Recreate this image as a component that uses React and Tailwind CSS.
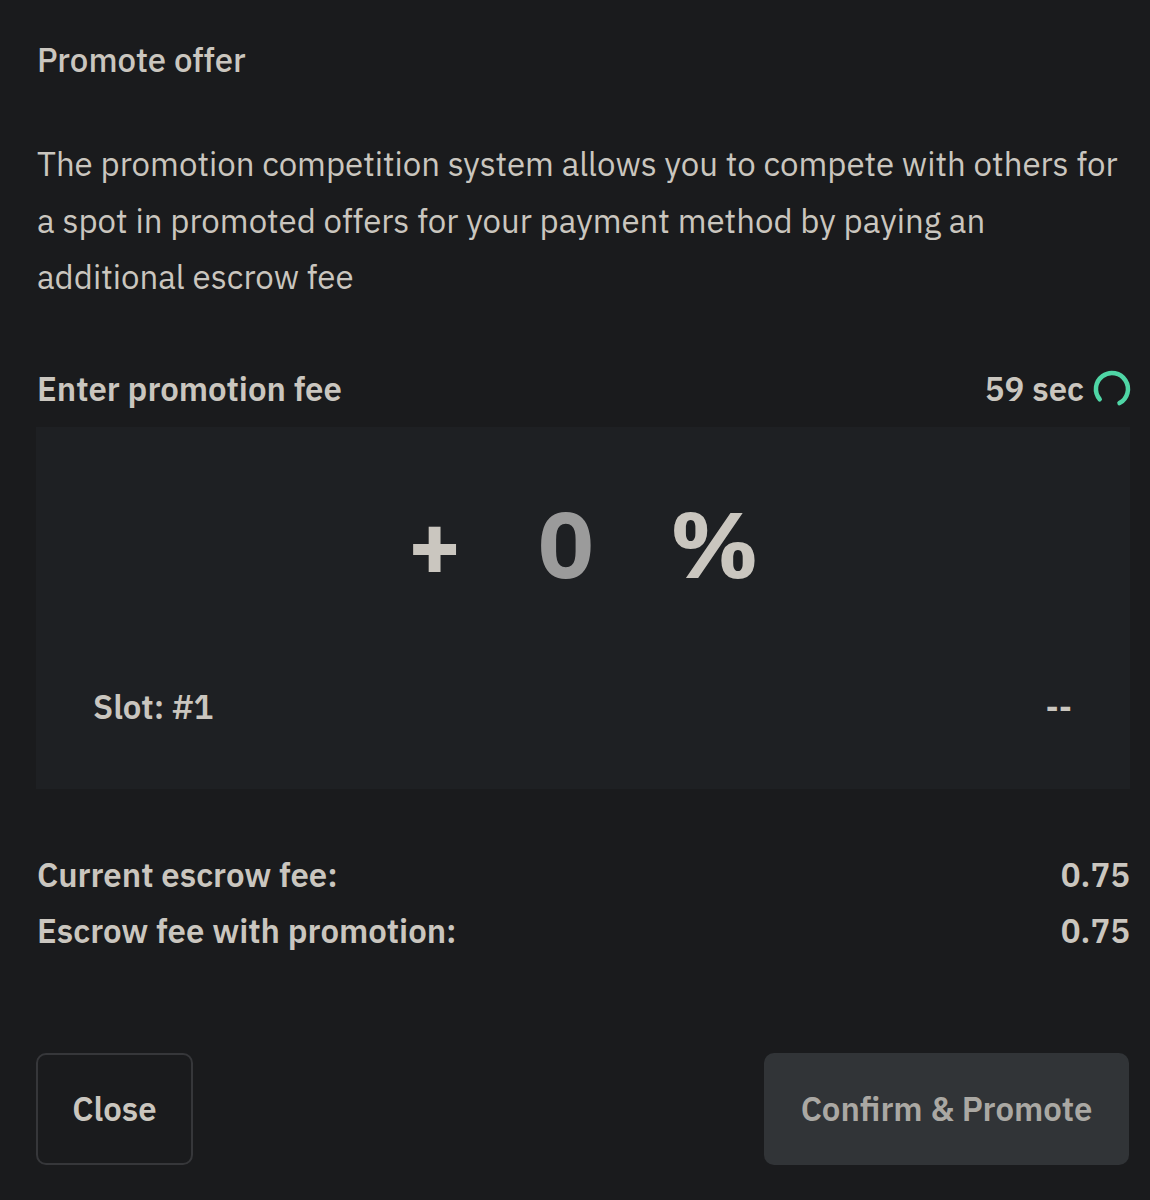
export default function App() {
  return (
    <div
      className="w-[1150px] h-[1200px] bg-[#1a1b1d] text-[#cac6bf] px-[37px] pt-[40px]"
      style={{ fontFamily: '"IBM Plex Sans", Roboto, sans-serif' }}
    >
      <div className="text-[33px] leading-[40px] font-medium">Promote offer</div>
      <p className="mt-[56px] -mr-[20px] text-[33px] leading-[56.5px] font-normal">
        The promotion competition system allows you to compete with others for a spot in promoted offers for your payment method by paying an additional escrow fee
      </p>
      <div className="mt-[63px] flex items-center justify-between">
        <div className="text-[33px] leading-[40px] font-semibold">Enter promotion fee</div>
        <div className="flex items-center gap-[8px] -mr-[19px]">
          <span className="text-[33px] leading-[40px] font-semibold">59 sec</span>
          <svg width="40" height="40" viewBox="0 0 40 40" fill="none">
            <path
              d="M7.7 30.3 A 16 16 0 1 1 27.5 34.1"
              stroke="#4fd6a6"
              strokeWidth="4.5"
              strokeLinecap="round"
            />
          </svg>
        </div>
      </div>
      <div className="mt-[18px] -ml-[1px] w-[1094px] h-[362px] bg-[#1e2023] flex flex-col">
        <div className="h-[234px] flex items-center justify-center">
          <div className="flex items-center gap-[76px] font-bold text-[92px] leading-none">
            <span className="text-[#cac6bf]">+</span>
            <span className="text-[#9b9b9b]">0</span>
            <span className="text-[#cac6bf]">%</span>
          </div>
        </div>
        <div className="flex items-center justify-between pl-[57px] pr-[58px] h-[92px]">
          <span className="text-[33px] font-semibold">Slot: #1</span>
          <span className="text-[33px] font-semibold">--</span>
        </div>
      </div>
      <div className="mt-[58px] flex flex-col text-[33px] leading-[56px] font-semibold">
        <div className="flex justify-between -mr-[17px]">
          <span>Current escrow fee:</span>
          <span>0.75</span>
        </div>
        <div className="flex justify-between -mr-[17px]">
          <span>Escrow fee with promotion:</span>
          <span>0.75</span>
        </div>
      </div>
      <div className="mt-[94px] flex justify-between -ml-[1px] -mr-[16px]">
        <button className="w-[157px] h-[112px] rounded-[10px] border-2 border-[#36373a] text-[33px] font-semibold text-[#cac6bf] flex items-center justify-center">
          Close
        </button>
        <button className="w-[365px] h-[112px] rounded-[10px] bg-[#313437] text-[33px] font-semibold text-[#aaa8a3] flex items-center justify-center">
          Confirm &amp; Promote
        </button>
      </div>
    </div>
  );
}
